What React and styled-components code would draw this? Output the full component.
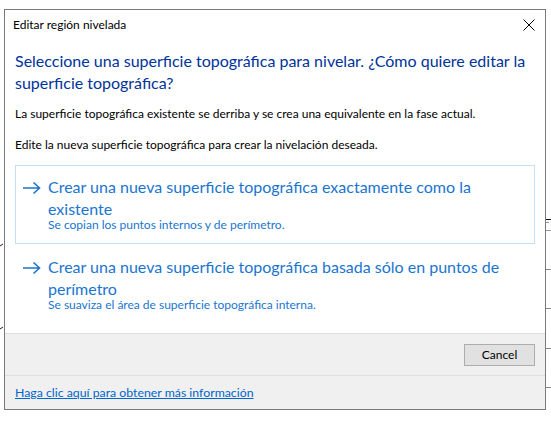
import styled, { createGlobalStyle } from "styled-components";

const GlobalStyle = createGlobalStyle`
  html, body {
    margin: 0;
    padding: 0;
    background: #ffffff;
  }
  body {
    font-family: "Segoe UI", Lato, "Liberation Sans", Arial, sans-serif;
  }
`;

// fondo de escritorio detrás del diálogo
const Desktop = styled.div`
  position: relative;
  width: 551px;
  height: 421px;
  padding: 9px 0 0 4px;
  box-sizing: border-box;
  overflow: hidden;
`;

const Scribbles = styled.svg`
  position: absolute;
  left: 0;
  top: 0;
  width: 551px;
  height: 421px;
  pointer-events: none;
`;

// ventana
const Window = styled.div`
  position: relative;
  width: 542px;
  height: 401px;
  border: 1px solid #7a7a7a;
  box-sizing: border-box;
  background: #ffffff;
  display: flex;
  flex-direction: column;
`;

const TitleBar = styled.div`
  height: 29px;
  display: flex;
  align-items: center;
  justify-content: space-between;
  padding: 0 9px 0 8px;
  font-size: 12px;
  color: #000;
`;

const CloseButton = styled.div`
  width: 14px;
  height: 14px;
  display: flex;
  align-items: center;
  justify-content: center;
`;

const Content = styled.div`
  padding: 11px 10px 0 10px;
  display: flex;
  flex-direction: column;
`;

const MainInstruction = styled.div`
  font-size: 16px;
  line-height: 22px;
  color: #003399;
`;

const Paragraph = styled.p`
  margin: ${(p) => p.$top}px 0 0 0;
  font-size: 12px;
  line-height: 16px;
  color: #000;
`;

const Options = styled.div`
  margin-top: 12px;
  display: flex;
  flex-direction: column;
  gap: 1px;
`;

const CommandLink = styled.div`
  width: 520px;
  box-sizing: border-box;
  border: 1px solid ${(p) => (p.$hover ? "#c4e1f7" : "transparent")};
  padding: 10px 8px 10px 6px;
  display: flex;
  gap: 7px;
`;

const ArrowBox = styled.div`
  width: 19px;
  height: 24px;
  display: flex;
  align-items: center;
  flex-shrink: 0;
`;

const LinkText = styled.div`
  display: flex;
  flex-direction: column;
`;

const LinkTitle = styled.div`
  font-size: 16px;
  line-height: 22px;
  color: #1a75cf;
`;

const LinkNote = styled.div`
  font-size: 12px;
  line-height: 16px;
  color: #1a75cf;
  margin-top: -3px;
`;

const Footer = styled.div`
  margin-top: auto;
  background: #f0f0f0;
  border-top: 1px solid #dfdfdf;
  height: 41px;
  display: flex;
  align-items: center;
  justify-content: flex-end;
  padding: 0 10px;
`;

const Button = styled.button`
  width: 71px;
  height: 22px;
  border: 1px solid #adadad;
  background: #e1e1e1;
  font-family: inherit;
  font-size: 12px;
  color: #000;
  padding: 0;
`;

const InfoBar = styled.div`
  background: #f0f0f0;
  border-top: 1px solid #dfdfdf;
  height: 33px;
  display: flex;
  align-items: center;
  padding: 0 10px;
`;

const InfoLink = styled.a`
  font-size: 12.3px;
  color: #0066cc;
  text-decoration: underline;
  cursor: pointer;
`;

function Arrow() {
  return (
    <svg width="19" height="14" viewBox="0 0 19 14">
      <path d="M1 7 H17 M11.5 1.5 L17.5 7 L11.5 12.5" fill="none" stroke="#1a75cf" strokeWidth="1.6" />
    </svg>
  );
}

const options = [
  {
    title: "Crear una nueva superficie topográfica exactamente como la existente",
    note: "Se copian los puntos internos y de perímetro.",
    hover: true,
  },
  {
    title: "Crear una nueva superficie topográfica basada sólo en puntos de perímetro",
    note: "Se suaviza el área de superficie topográfica interna.",
    hover: false,
  },
];

export default function App() {
  return (
    <>
      <GlobalStyle />
      <Desktop>
        <Scribbles viewBox="0 0 551 421">
          <path d="M0 246 L3 244" stroke="#222" strokeWidth="1" />
          <path d="M0 329 L3 327" stroke="#222" strokeWidth="1" />
          <path d="M546 219.5 H551" stroke="#111" strokeWidth="1" />
          <path d="M546 222.5 H549 M546 230.5 H551" stroke="#999" strokeWidth="1" />
          <path d="M546 269.5 H551 M546 308.5 H551 M546 348.5 H551 M546 387.5 H551" stroke="#888" strokeWidth="1" />
        </Scribbles>
        <Window>
          <TitleBar>
            <span>Editar región nivelada</span>
            <CloseButton>
              <svg width="12" height="12" viewBox="0 0 12 12">
                <path d="M0.5 0.5 L11.5 11.5 M11.5 0.5 L0.5 11.5" stroke="#000" strokeWidth="1" />
              </svg>
            </CloseButton>
          </TitleBar>
          <Content>
            <MainInstruction>
              Seleccione una superficie topográfica para nivelar. ¿Cómo quiere editar la superficie topográfica?
            </MainInstruction>
            <Paragraph $top={12}>
              La superficie topográfica existente se derriba y se crea una equivalente en la fase actual.
            </Paragraph>
            <Paragraph $top={15}>
              Edite la nueva superficie topográfica para crear la nivelación deseada.
            </Paragraph>
            <Options>
              {options.map((o) => (
                <CommandLink key={o.title} $hover={o.hover}>
                  <ArrowBox>
                    <Arrow />
                  </ArrowBox>
                  <LinkText>
                    <LinkTitle>{o.title}</LinkTitle>
                    <LinkNote>{o.note}</LinkNote>
                  </LinkText>
                </CommandLink>
              ))}
            </Options>
          </Content>
          <Footer>
            <Button>Cancel</Button>
          </Footer>
          <InfoBar>
            <InfoLink>Haga clic aquí para obtener más información</InfoLink>
          </InfoBar>
        </Window>
      </Desktop>
    </>
  );
}
